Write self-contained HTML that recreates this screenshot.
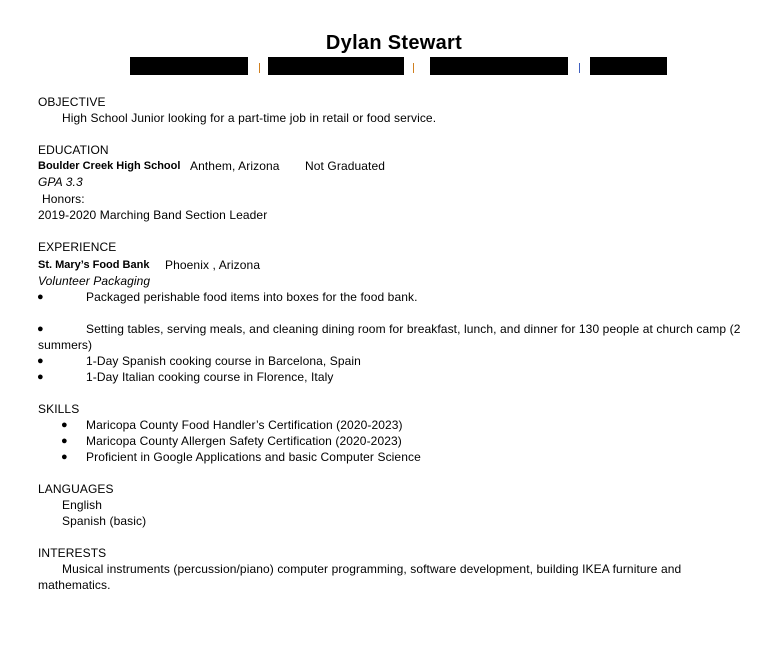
<!DOCTYPE html>
<html><head><meta charset="utf-8"><style>
body{margin:0;width:767px;height:648px;background:#fff;position:relative;font-family:"Liberation Sans",sans-serif;font-size:12px;letter-spacing:0.1px;color:#000;overflow:hidden}
.l{position:absolute;white-space:nowrap;line-height:16px}
.b{position:absolute;background:#000;top:57px;height:18px}
.s{position:absolute;top:63px;width:1px;height:10px}
.d{font-size:11px}
.bb{font-weight:bold;font-size:11px;letter-spacing:0}
</style></head><body>
<div class="l" style="left:0;width:788px;text-align:center;top:31px;font-size:20px;font-weight:bold;line-height:24px;letter-spacing:0.3px">Dylan Stewart</div>
<div class="b" style="left:130px;width:118px"></div>
<div class="s" style="left:259px;background:#d08020"></div>
<div class="b" style="left:268px;width:136px"></div>
<div class="s" style="left:413px;background:#d08020"></div>
<div class="b" style="left:430px;width:138px"></div>
<div class="s" style="left:579px;background:#4060c0"></div>
<div class="b" style="left:590px;width:77px"></div>

<div class="l" style="left:38px;top:94px">OBJECTIVE</div>
<div class="l" style="left:62px;top:110px">High School Junior looking for a part-time job in retail or food service.</div>
<div class="l" style="left:38px;top:142px">EDUCATION</div>
<div class="l bb" style="left:38px;top:158px">Boulder Creek High School</div>
<div class="l" style="left:190px;top:158px">Anthem, Arizona</div>
<div class="l" style="left:305px;top:158px">Not Graduated</div>
<div class="l" style="left:38px;top:174px;font-style:italic">GPA 3.3</div>
<div class="l" style="left:42px;top:191px">Honors:</div>
<div class="l" style="left:38px;top:207px">2019-2020 Marching Band Section Leader</div>
<div class="l" style="left:38px;top:239px">EXPERIENCE</div>
<div class="l bb" style="left:38px;top:257px">St. Mary’s Food Bank</div>
<div class="l" style="left:165px;top:257px">Phoenix , Arizona</div>
<div class="l" style="left:38px;top:273px;font-style:italic">Volunteer Packaging</div>
<div class="l d" style="left:37px;top:289px">●</div><div class="l" style="left:86px;top:289px">Packaged perishable food items into boxes for the food bank.</div>
<div class="l d" style="left:37px;top:321px">●</div><div class="l" style="left:86px;top:321px">Setting tables, serving meals, and cleaning dining room for breakfast, lunch, and dinner for 130 people at church camp (2</div>
<div class="l" style="left:38px;top:337px">summers)</div>
<div class="l d" style="left:37px;top:353px">●</div><div class="l" style="left:86px;top:353px">1-Day Spanish cooking course in Barcelona, Spain</div>
<div class="l d" style="left:37px;top:369px">●</div><div class="l" style="left:86px;top:369px">1-Day Italian cooking course in Florence, Italy</div>
<div class="l" style="left:38px;top:401px">SKILLS</div>
<div class="l d" style="left:61px;top:417px">●</div><div class="l" style="left:86px;top:417px">Maricopa County Food Handler’s Certification (2020-2023)</div>
<div class="l d" style="left:61px;top:433px">●</div><div class="l" style="left:86px;top:433px">Maricopa County Allergen Safety Certification (2020-2023)</div>
<div class="l d" style="left:61px;top:449px">●</div><div class="l" style="left:86px;top:449px">Proficient in Google Applications and basic Computer Science</div>
<div class="l" style="left:38px;top:481px">LANGUAGES</div>
<div class="l" style="left:62px;top:497px">English</div>
<div class="l" style="left:62px;top:513px">Spanish (basic)</div>
<div class="l" style="left:38px;top:545px">INTERESTS</div>
<div class="l" style="left:62px;top:561px">Musical instruments (percussion/piano) computer programming, software development, building IKEA furniture and</div>
<div class="l" style="left:38px;top:577px">mathematics.</div>
</body></html>
